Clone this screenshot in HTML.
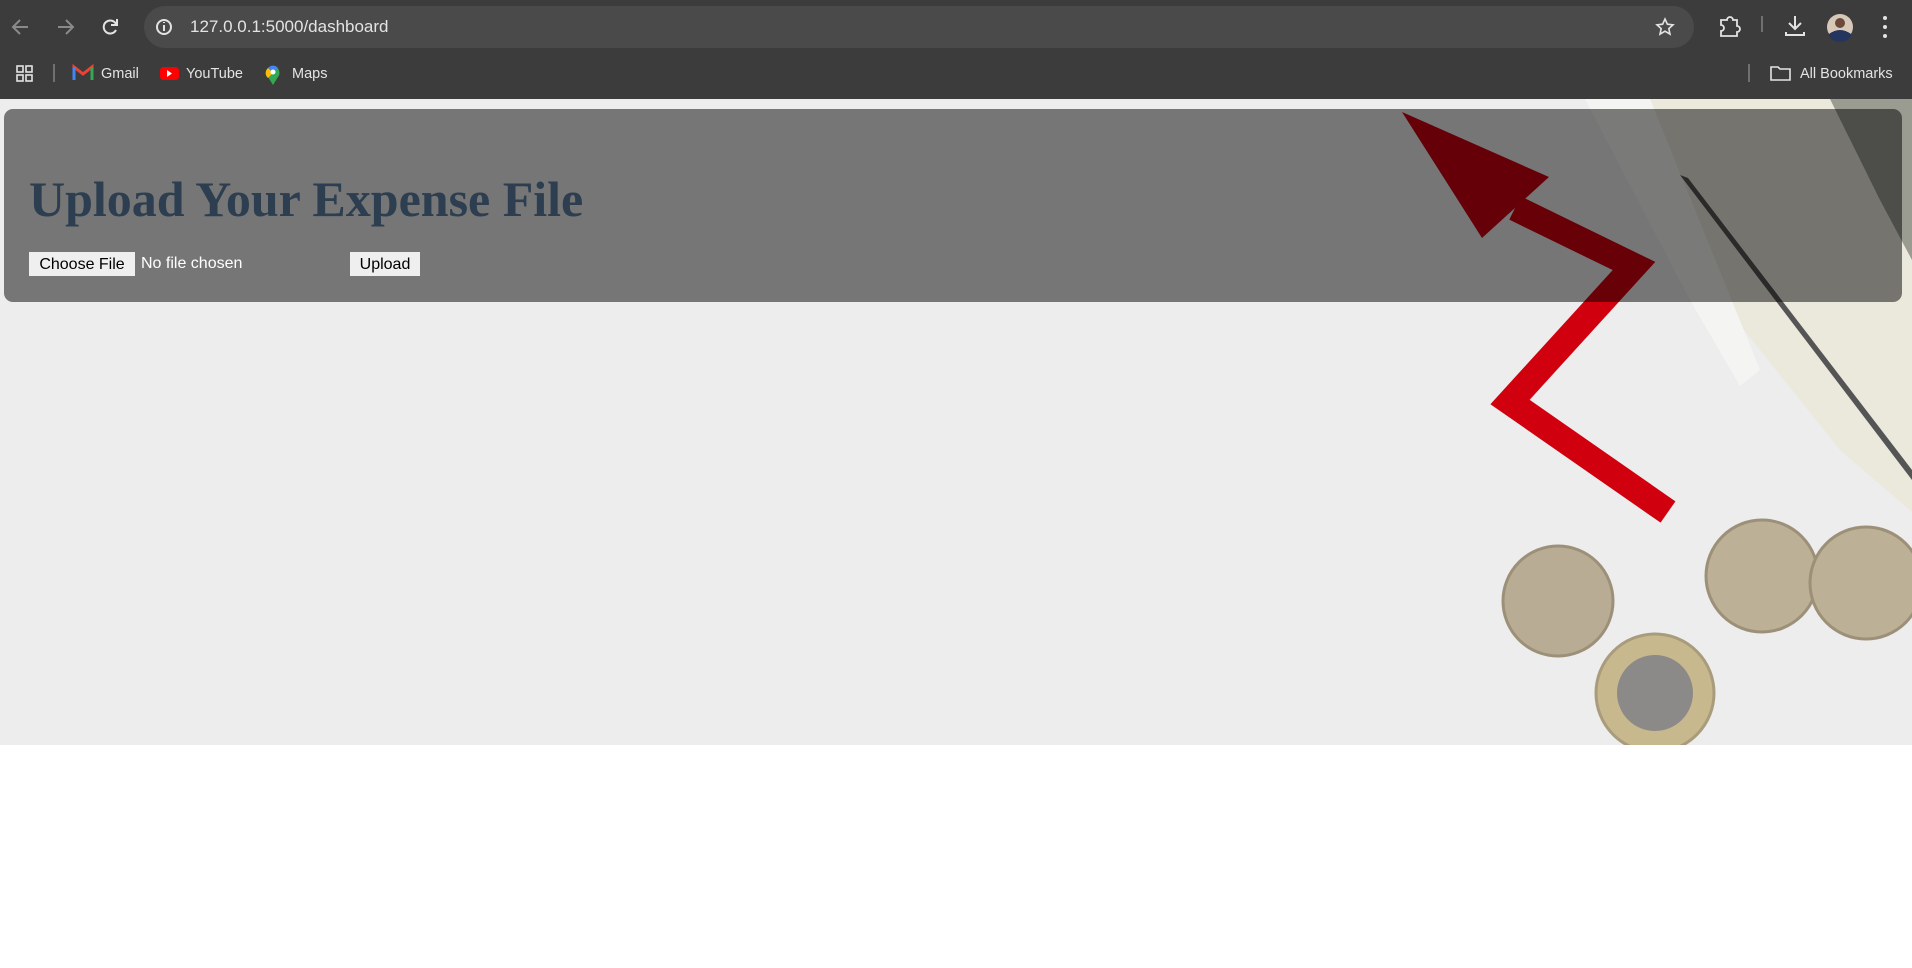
<!DOCTYPE html>
<html><head><meta charset="utf-8"><style>
*{margin:0;padding:0;box-sizing:border-box}
body{width:1912px;height:968px;background:#fff;font-family:"Liberation Sans",sans-serif;position:relative;overflow:hidden}
.top{position:absolute;left:0;top:0;width:1912px;height:99px;background:#3c3c3c}
.addr{position:absolute;left:144px;top:6px;width:1550px;height:42px;border-radius:21px;background:#4a4a4a}
.t{position:absolute;color:#e3e3e3;white-space:nowrap}
.page{position:absolute;left:0;top:99px;width:1912px;height:646px;background:#ededed}
.panel{position:absolute;left:4px;top:109px;width:1898px;height:193px;border-radius:9px;background:rgba(0,0,0,0.5)}
h1{position:absolute;left:29px;top:169px;font-family:"Liberation Serif",serif;font-weight:bold;font-size:50px;color:#2c3e50;white-space:nowrap;line-height:60px}
.btn{position:absolute;top:252px;height:24px;background:#efefef;color:#000;font-size:16px;line-height:26px;text-align:center}
</style></head><body>
<div class="top"></div>
<div class="addr"></div>
<svg style="position:absolute;left:0;top:0" width="1912" height="99">
<g fill="none" stroke="#8a8a8a" stroke-width="2"><path d="M28 27H13M20 20l-7 7 7 7"/><path d="M58 27h15M66 20l7 7-7 7"/></g>
<g fill="none" stroke="#e3e3e3" stroke-width="2"><path d="M116 24a6.5 6.5 0 1 0 0 6"/><path d="M117 19v6h-6"/>
<circle cx="164" cy="27" r="7"/><path d="M164 25v6M164 22v1"/>
<path d="M1665 19l2.4 5.2 5.6.6-4.2 3.8 1.2 5.5-5-2.9-5 2.9 1.2-5.5-4.2-3.8 5.6-.6z" stroke-width="1.6"/>
<path d="M1721 20h6a3 3 0 0 1 6 0h4v6a3 3 0 0 1 0 6v4h-16v-5a3 3 0 0 0 0-6z" stroke-width="1.8"/>
<path d="M1795 16v13M1789 23l6 6 6-6M1786 32v3h18v-3"/>
<rect x="17" y="66" width="6" height="6" stroke-width="1.6"/><rect x="26" y="66" width="6" height="6" stroke-width="1.6"/><rect x="17" y="75" width="6" height="6" stroke-width="1.6"/><rect x="26" y="75" width="6" height="6" stroke-width="1.6"/>
<path d="M1771 67h7l2 2h10v11h-19z" stroke-width="1.6"/></g>
<g stroke="#707070" stroke-width="2"><path d="M54 64v18M1762 16v16M1749 64v18"/></g>
<g fill="#e3e3e3"><circle cx="1885" cy="18" r="2"/><circle cx="1885" cy="27" r="2"/><circle cx="1885" cy="36" r="2"/></g>
<circle cx="1840" cy="27" r="13" fill="#d8c8b8"/><path d="M1829 34q11-8 22 0v2a13 13 0 0 1-22 0z" fill="#24365e"/><circle cx="1840" cy="23" r="5" fill="#6b4a3a"/>
<path d="M74 80V67l9 7 9-7v13" fill="none" stroke="#ea4335" stroke-width="3"/><path d="M74 67v13" stroke="#4285f4" stroke-width="3"/><path d="M92 67v13" stroke="#34a853" stroke-width="3"/>
<rect x="160" y="67" width="19" height="13" rx="3.5" fill="#f00"/><path d="M167 70v7l5-3.5z" fill="#fff"/>
<path d="M273 85l-5-8a6.5 6.5 0 1 1 10 0z" fill="#34a853"/><path d="M268 68a6.5 6.5 0 0 1 10 0l-5 5z" fill="#4285f4"/><path d="M268 68l5 5-5 5a6.5 6.5 0 0 1 0-10z" fill="#fbbc04"/><circle cx="273" cy="72" r="2.5" fill="#fff"/>
</svg>
<div class="t" style="left:190px;top:17px;font-size:17px">127.0.0.1:5000/dashboard</div>
<div class="t" style="left:101px;top:66px;font-size:14.5px">Gmail</div>
<div class="t" style="left:186px;top:66px;font-size:14.5px">YouTube</div>
<div class="t" style="left:292px;top:66px;font-size:14.5px">Maps</div>
<div class="t" style="left:1800px;top:66px;font-size:14.5px">All Bookmarks</div>
<div class="page">
<svg width="1912" height="646" style="position:absolute;left:0;top:0">
<g transform="translate(0,-99)">
<polygon points="1600,99 1912,99 1912,512 1840,450 1720,300 1660,180" fill="#ebe8dc"/>
<polygon points="1585,99 1650,99 1760,370 1740,386 1690,300" fill="#f4f4f2"/>
<polygon points="1680,175 1688,178 1912,470 1912,480" fill="#555"/>
<polygon points="1830,99 1912,99 1912,260 1880,200" fill="#9a9c92"/>
<polygon points="1402,112 1549,177 1482,238" fill="#cc0010"/>
<polyline points="1515,208 1634,266 1510,402 1668,512" fill="none" stroke="#d0000f" stroke-width="26" stroke-linejoin="miter"/>
<circle cx="1558" cy="601" r="55" fill="#b8ac94" stroke="#9c9078" stroke-width="3"/>
<circle cx="1655" cy="693" r="59" fill="#c8b88e" stroke="#a89c7c" stroke-width="3"/><circle cx="1655" cy="693" r="38" fill="#8c8a88"/>
<circle cx="1762" cy="576" r="56" fill="#bcb096" stroke="#9c9078" stroke-width="3"/>
<circle cx="1866" cy="583" r="56" fill="#bcb096" stroke="#9c9078" stroke-width="3"/>
</g></svg>
</div>
<div class="panel"></div>
<h1>Upload Your Expense File</h1>
<div class="btn" style="left:29px;width:106px">Choose File</div>
<div class="t" style="left:141px;top:255px;font-size:16px;color:#fff">No file chosen</div>
<div class="btn" style="left:350px;width:70px">Upload</div>
</body></html>
